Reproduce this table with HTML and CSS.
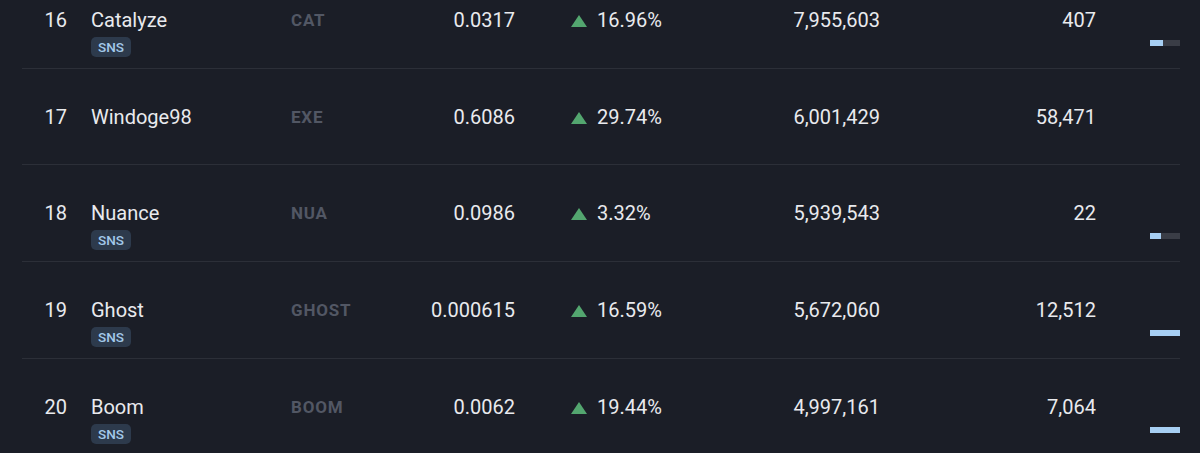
FILE: index.html
```html
<!DOCTYPE html>
<html lang="en">
<head>
<meta charset="utf-8">
<title>Tokens</title>
<link rel="stylesheet" href="styles.css">
</head>
<body>
<div class="list">
  <div class="row">
    <div class="rank">16</div>
    <div class="name"><div class="title">Catalyze</div><span class="badge">SNS</span></div>
    <div class="sym">CAT</div>
    <div class="price">0.0317</div>
    <div class="change"><span class="up"></span>16.96%</div>
    <div class="vol">7,955,603</div>
    <div class="count">407</div>
    <div class="barcell"><div class="bar"><div class="fill" style="width:43%"></div></div></div>
  </div>
  <div class="row">
    <div class="rank">17</div>
    <div class="name"><div class="title">Windoge98</div></div>
    <div class="sym">EXE</div>
    <div class="price">0.6086</div>
    <div class="change"><span class="up"></span>29.74%</div>
    <div class="vol">6,001,429</div>
    <div class="count">58,471</div>
    <div class="barcell"></div>
  </div>
  <div class="row">
    <div class="rank">18</div>
    <div class="name"><div class="title">Nuance</div><span class="badge">SNS</span></div>
    <div class="sym">NUA</div>
    <div class="price">0.0986</div>
    <div class="change"><span class="up"></span>3.32%</div>
    <div class="vol">5,939,543</div>
    <div class="count">22</div>
    <div class="barcell"><div class="bar"><div class="fill" style="width:36%"></div></div></div>
  </div>
  <div class="row">
    <div class="rank">19</div>
    <div class="name"><div class="title">Ghost</div><span class="badge">SNS</span></div>
    <div class="sym">GHOST</div>
    <div class="price">0.000615</div>
    <div class="change"><span class="up"></span>16.59%</div>
    <div class="vol">5,672,060</div>
    <div class="count">12,512</div>
    <div class="barcell"><div class="bar"><div class="fill" style="width:100%"></div></div></div>
  </div>
  <div class="row">
    <div class="rank">20</div>
    <div class="name"><div class="title">Boom</div><span class="badge">SNS</span></div>
    <div class="sym">BOOM</div>
    <div class="price">0.0062</div>
    <div class="change"><span class="up"></span>19.44%</div>
    <div class="vol">4,997,161</div>
    <div class="count">7,064</div>
    <div class="barcell"><div class="bar"><div class="fill" style="width:100%"></div></div></div>
  </div>
</div>
</body>
</html>
```

FILE: styles.css
```css
html, body {
  margin: 0;
  padding: 0;
  background: #1b1e27;
  height: 100%;
  overflow: hidden;
}
body {
  font-family: Roboto, "Noto Sans", sans-serif;
  color: #e9eaee;
  font-size: 20px;
  line-height: 24px;
}
.list {
  margin-top: -28px;
  margin-left: 22px;
  width: 1158px;
}
.row {
  display: grid;
  grid-template-columns: 45px 224px 124px 100px 210px 155px 216px 84px;
  height: 96.67px;
  box-sizing: border-box;
  padding-top: 36px;
  border-bottom: 1px solid #2c2f38;
  align-items: start;
}
.rank, .price, .vol, .count {
  text-align: right;
}
.name {
  padding-left: 24px;
}
.title {
  height: 24px;
}
.badge {
  display: inline-block;
  margin-top: 5px;
  height: 20px;
  line-height: 20px;
  padding: 0 7px;
  border-radius: 5px;
  background: #2d3a4c;
  color: #a3c9ea;
  font-size: 13.5px;
  font-weight: 500;
}
.sym {
  color: #525764;
  font-weight: 700;
  font-size: 17px;
  letter-spacing: 0.8px;
}
.change {
  padding-left: 56px;
  display: flex;
  align-items: center;
  gap: 10px;
}
.up {
  display: inline-block;
  width: 0;
  height: 0;
  border-left: 8.5px solid transparent;
  border-right: 8.5px solid transparent;
  border-bottom: 12px solid #53a66f;
  margin-top: 2px;
}
.barcell {
  padding-left: 54px;
}
.bar {
  margin-top: 32px;
  width: 30px;
  height: 6px;
  background: #3a3d46;
}
.fill {
  height: 100%;
  background: #a7cff3;
}
```
